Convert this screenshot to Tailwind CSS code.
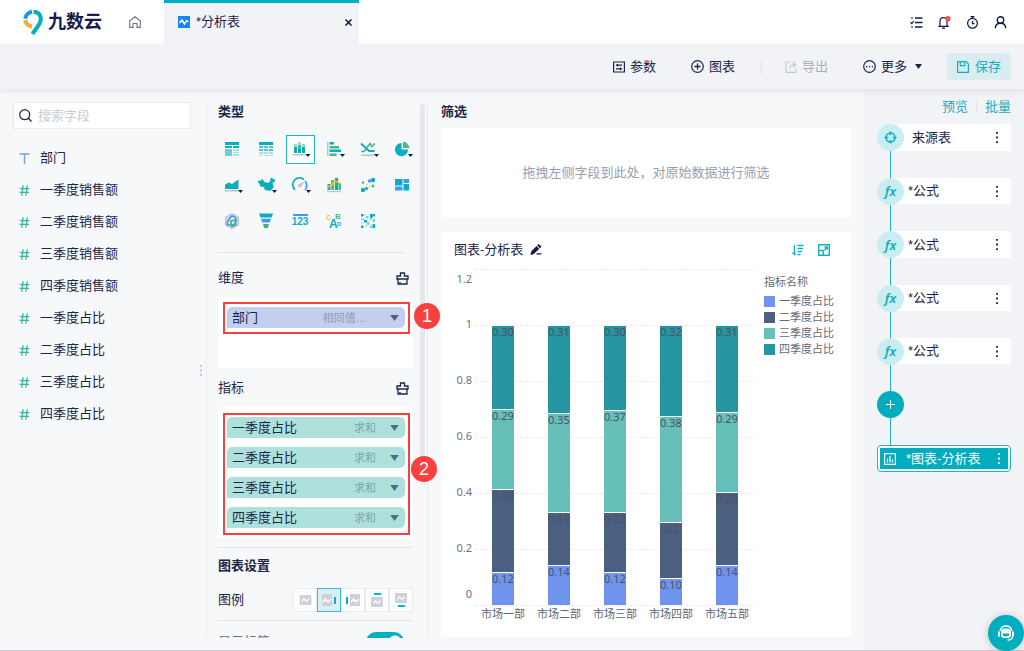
<!DOCTYPE html>
<html lang="zh-CN">
<head>
<meta charset="utf-8">
<title>分析表</title>
<script src="https://cdn.jsdelivr.net/npm/@tailwindcss/browser@4"></script>
</head>
<body class="h-screen overflow-hidden bg-[#f7f8fa] font-['Liberation_Sans','Noto_Sans_CJK_SC',sans-serif] text-[13px] leading-5 text-[#1c2549]">
<svg class="hidden" aria-hidden="true">
  <symbol id="brush" viewBox="0 0 13 13"><path d="M1 4h3.500V1h4v3H12v3H1zM2 7v5h9V7M4 12v-2" fill="none" stroke="currentColor" stroke-width="1.300"/></symbol>
  <symbol id="caret" viewBox="0 0 10 7"><path d="M0 0h10L5 7z" fill="currentColor"/></symbol>
  <symbol id="hash" viewBox="0 0 12 12"><path d="M4.500 .500 3 11.500M9 .500 7.500 11.500M1 4h10.500M.500 8H11" fill="none" stroke="#3db5a6" stroke-width="1.500"/></symbol>
  <symbol id="dots" viewBox="0 0 4 14"><path d="M1 1h2v2H1zM1 6h2v2H1zM1 11h2v2H1z" fill="currentColor"/></symbol>
  <symbol id="thumb" viewBox="0 0 13 11"><path d="M0 0h13v11H0z" fill="#d0d0da"/><path d="m2.500 7 2.500-3 2.500 3 3-3" fill="none" stroke="#fff" stroke-width="1.400"/></symbol>
</svg>
<div class="flex h-full flex-col border-b border-[#cdced2]">

  <header class="flex h-11 shrink-0 items-center bg-white">
    <a href="#" class="flex h-full w-[106px] items-center gap-1 pl-[23px]" aria-label="九数云">
      <svg class="h-[26px] w-[21px] shrink-0" viewBox="0 0 21 26"><path d="M2.200 9.800a8 8 0 0 1 6.800-7" fill="none" stroke="#0f9be5" stroke-width="4"/><path d="M2.200 11.200a8 8 0 0 0 6.800 6.300" fill="none" stroke="#f9a83c" stroke-width="4"/><path d="M10.500 2.700c5 0 7.800 4 7.200 8.300-.600 5-5 8.500-8.200 14" fill="none" stroke="#00afbf" stroke-width="4"/></svg>
      <span class="shrink-0 text-[18px] font-bold leading-6 text-[#171c4e]">九数云</span>
    </a>
    <a href="#" class="ml-[23px] text-[#6d7488]" aria-label="首页"><svg class="h-3 w-3" viewBox="0 0 12 12"><path d="M.700 11.400V4.800L6 .700l5.300 4.100v6.600H8V7.500H4v3.900z" fill="none" stroke="currentColor" stroke-width="1.100"/></svg></a>
    <div class="ml-[23px] flex h-full w-[195px] items-center border-t-[3px] border-[#00b0bf] bg-[#f1f3f7] pb-[3px] pl-[14px] pr-[7px]">
      <svg class="h-3 w-3" viewBox="0 0 12 12"><path d="M0 0h12v12H0z" fill="#1684fb"/><path d="m1.500 7 2.500-3 2.500 4 2-3.500 2 1.500" fill="none" stroke="#fff" stroke-width="1.500"/></svg>
      <span class="ml-1.5 flex-1">*分析表</span>
      <button class="text-[#0f1740]" aria-label="关闭"><svg class="h-[7px] w-[7px]" viewBox="0 0 7 7"><path d="m.500.500 6 6m0-6-6 6" stroke="currentColor" stroke-width="1.500"/></svg></button>
    </div>
    <nav class="ml-auto flex items-center gap-[15px] pr-[17px]">
      <button aria-label="任务"><svg class="h-[13px] w-[13px]" viewBox="0 0 13 13"><path d="M5 2h7.500M5 6.500h7.500M5 11h7.500" stroke="#131b45" stroke-width="1.600"/><path d="M1 2h2M.500 6.200l1.300 1.300 2-2.500M1 11h2" fill="none" stroke="#131b45" stroke-width="1.200"/></svg></button>
      <button aria-label="通知"><svg class="h-[13px] w-[13px]" viewBox="0 0 13 13"><path d="M2 10V5.500C2 3.200 3.500 1.600 5.500 1.600S9 3.200 9 5.500V10M.300 10.300h10.500M4 12.200h3" fill="none" stroke="#131b45" stroke-width="1.200"/><circle cx="10" cy="2.800" r="2.700" fill="#f0525a"/></svg></button>
      <button aria-label="历史"><svg class="h-[13px] w-[13px]" viewBox="0 0 13 13"><circle cx="6.500" cy="7.300" r="4.900" fill="none" stroke="#131b45" stroke-width="1.300"/><path d="M4.500.700h4M6.500.700v2M6.500 4.700v3h2" fill="none" stroke="#131b45" stroke-width="1.300"/></svg></button>
      <button aria-label="用户"><svg class="h-[13px] w-[13px]" viewBox="0 0 13 13"><circle cx="6.500" cy="4" r="3.200" fill="none" stroke="#131b45" stroke-width="1.400"/><path d="M1.300 12.200c0-3 2-5 5.200-5s5.200 2 5.200 5" fill="none" stroke="#131b45" stroke-width="1.400"/></svg></button>
    </nav>
  </header>

  <div class="relative flex h-[45px] shrink-0 items-center justify-end bg-[#f1f3f7] pr-[13px] shadow-[0_2px_6px_rgba(20,30,60,0.09)]">
    <button class="flex items-center gap-[5px]"><svg class="h-3 w-3" viewBox="0 0 12 12"><path d="M.600 1h10.800v10H.600z" fill="none" stroke="#1c2549" stroke-width="1.200"/><path d="M3 4.200h6M3 7.800h6M4.500 3v2.400M7.500 6.600V9" stroke="#1c2549" stroke-width="1.200"/></svg>参数</button>
    <button class="ml-[35px] flex items-center gap-[5px]"><svg class="h-[13px] w-[13px]" viewBox="0 0 13 13"><circle cx="6.500" cy="6.500" r="5.800" fill="none" stroke="#1c2549" stroke-width="1.200"/><path d="M3.500 6.500h6M6.500 3.500v6" stroke="#1c2549" stroke-width="1.300"/></svg>图表</button>
    <span class="ml-[26px] h-4 w-px bg-[#e1e3e9]"></span>
    <button class="ml-[23px] flex items-center gap-[5px] text-[#a9afbd]" disabled><svg class="h-3 w-3" viewBox="0 0 12 12"><path d="M5 1H1v10.300h10V7.500M4.800 8c0-3 1.500-4.500 5.500-4.500M8 .800l2.800 2.700L8 6.200" fill="none" stroke="#c5c9d3" stroke-width="1.200"/></svg>导出</button>
    <button class="ml-[35px] flex items-center gap-[5px]"><svg class="h-[13px] w-[13px]" viewBox="0 0 13 13"><circle cx="6.500" cy="6.500" r="5.800" fill="none" stroke="#1c2549" stroke-width="1.200"/><path d="M3 6h1.300v1.200H3zM5.900 6h1.300v1.200H5.900zM8.800 6h1.300v1.200H8.800z" fill="#1c2549"/></svg>更多<svg class="ml-[3px] h-[5px] w-[7px]"><use href="#caret"/></svg></button>
    <button class="ml-[25px] flex h-[27px] w-16 items-center justify-center gap-[6px] rounded-sm bg-[#d9ecf0] text-[#1badbc]"><svg class="h-3 w-3" viewBox="0 0 12 12"><path d="M.600.600h8.400l2.400 2.400v8.400H.600zM3.300.600v4h4.500v-4" fill="none" stroke="currentColor" stroke-width="1.200"/></svg>保存</button>
  </div>

  <div class="flex min-h-0 flex-1">
    <aside class="relative w-[206px] shrink-0 pl-[13px] pr-[15px] pt-[13px]">
      <label class="flex h-[27px] items-center border border-[#e8eaee] bg-white pl-[5px]">
        <svg class="h-[13px] w-[13px] shrink-0" viewBox="0 0 13 13"><circle cx="5.700" cy="5.700" r="5" fill="none" stroke="#1c2549" stroke-width="1.200"/><path d="m9.300 9.300 3.200 3.200" stroke="#1c2549" stroke-width="1.300"/></svg>
        <input type="text" placeholder="搜索字段" aria-label="搜索字段" class="ml-1.5 w-full min-w-0 bg-transparent outline-none placeholder:text-[#c9ccd5]">
      </label>
      <ul class="mt-[13px] pl-[6px]">
        <li class="flex h-8 items-center gap-[10px]"><svg class="h-[11px] w-[11px]" viewBox="0 0 11 11"><path d="M.500 1h10M5.500 1v10" stroke="#7b9fe0" stroke-width="1.400"/></svg>部门</li>
        <li class="flex h-8 items-center gap-[10px]"><svg class="h-[11px] w-[11px]"><use href="#hash"/></svg>一季度销售额</li>
        <li class="flex h-8 items-center gap-[10px]"><svg class="h-[11px] w-[11px]"><use href="#hash"/></svg>二季度销售额</li>
        <li class="flex h-8 items-center gap-[10px]"><svg class="h-[11px] w-[11px]"><use href="#hash"/></svg>三季度销售额</li>
        <li class="flex h-8 items-center gap-[10px]"><svg class="h-[11px] w-[11px]"><use href="#hash"/></svg>四季度销售额</li>
        <li class="flex h-8 items-center gap-[10px]"><svg class="h-[11px] w-[11px]"><use href="#hash"/></svg>一季度占比</li>
        <li class="flex h-8 items-center gap-[10px]"><svg class="h-[11px] w-[11px]"><use href="#hash"/></svg>二季度占比</li>
        <li class="flex h-8 items-center gap-[10px]"><svg class="h-[11px] w-[11px]"><use href="#hash"/></svg>三季度占比</li>
        <li class="flex h-8 items-center gap-[10px]"><svg class="h-[11px] w-[11px]"><use href="#hash"/></svg>四季度占比</li>
      </ul>
      <svg class="absolute right-1 top-[276px] h-[11px] w-[2px]" viewBox="0 0 2 11"><path d="M0 0h2v2H0zM0 4.500h2v2H0zM0 9h2v2H0z" fill="#c4c8d1"/></svg>
    </aside>

    <section class="relative mb-3 mt-[13px] w-[222px] shrink-0 border-x border-[#e9ebef]">
      <div class="h-full overflow-hidden pl-[11px] pr-[14px]">
        <h2 class="font-bold">类型</h2>
        <div class="-ml-[3px] mt-[9px] grid w-[204px] grid-cols-6 [&>button]:flex [&>button]:h-9 [&>button]:items-center [&>button]:justify-center">
          <button aria-label="分组表"><svg class="h-5 w-5" viewBox="0 0 20 20"><path d="M3 3h14v3H3zM3 7h7v2H3zM11 7h6v2h-6z" fill="#0aaebd"/><path d="M3 10h7v7H3z" fill="#6ccdd6"/><path d="M11 10h6v2h-6zM11 13h6v1h-6zM11 15h6v2h-6z" fill="#a9e0e6"/></svg></button>
          <button aria-label="明细表"><svg class="h-5 w-5" viewBox="0 0 20 20"><path d="M3 3h14v3H3z" fill="#0aaebd"/><path d="M3 7h4v2H3zM8 7h4v2H8zM13 7h4v2h-4zM3 10h4v2H3zM8 10h4v2H8zM13 10h4v2h-4z" fill="#55c5cf"/><path d="M3 13h4v2H3zM8 13h4v2H8zM13 13h4v2h-4zM3 16h4v1H3zM8 16h4v1H8zM13 16h4v1h-4z" fill="#a9dfe5"/></svg></button>
          <button aria-label="柱状图"><span class="flex h-[29px] w-[29px] items-center justify-center border border-[#24b6c3] bg-white"><svg class="h-5 w-5" viewBox="0 0 20 20"><path d="M4 5h3v3H4zM12 5h3v3h-3z" fill="#8edce1"/><path d="M4 8h3v6H4zM8 10h3v4H8zM12 8h3v6h-3z" fill="#0aaebd"/><path d="M8 3h3v3H8z" fill="#a8dfb8"/><path d="M8 6h3v4H8z" fill="#43be82"/><path d="M3 15h13v1.500H3z" fill="#bfc0d0"/><path d="M15.500 15H20.500l-2.500 3z" fill="#131a42"/></svg></span></button>
          <button aria-label="条形图"><svg class="h-5 w-5 overflow-visible" viewBox="0 0 20 20"><path d="M3 3h1.500v14H3z" fill="#bfc0d0"/><path d="M5.500 3H10v2.500H5.500zM5.500 10.500H17V13H5.500z" fill="#0aaebd"/><path d="M5.500 7H15v2.500H5.500zM5.500 14.500h7V17h-7z" fill="#43be82"/><path d="M16 15h5l-2.500 3z" fill="#131a42"/></svg></button>
          <button aria-label="折线图"><svg class="h-5 w-5 overflow-visible" viewBox="0 0 20 20"><path d="M3 12.500h3l6-8 2 3 3-3" fill="none" stroke="#43be82" stroke-width="1.700"/><path d="m3 4.500 8 7.500h5.500" fill="none" stroke="#0aaebd" stroke-width="1.800"/><path d="M3 15.500h13V17H3z" fill="#bfc0d0"/><path d="M16 15h5l-2.500 3z" fill="#131a42"/></svg></button>
          <button aria-label="饼图"><svg class="h-5 w-5 overflow-visible" viewBox="0 0 20 20"><path d="M9.500 4a6.600 6.600 0 1 0 6.600 6.600H9.500z" fill="#0aaebd"/><path d="M11 2.800a6.300 6.300 0 0 1 6.200 6.300H11z" fill="#43be82"/><path d="M16 15h5l-2.500 3z" fill="#131a42"/></svg></button>
          <button aria-label="面积图"><svg class="h-5 w-5 overflow-visible" viewBox="0 0 20 20"><path d="M3 14V9.500L7 7.500l3 1.500 6.500-4.500V14z" fill="#0aaebd"/><path d="M3 15h13v1.500H3z" fill="#bfc0d0"/><path d="M16 15h5l-2.500 3z" fill="#131a42"/></svg></button>
          <button aria-label="地图"><svg class="h-5 w-5 overflow-visible" viewBox="0 0 20 20"><path d="m1.500 6 3-.500L6.500 4l2 3 3.500 1 2.500-2-.500-2 2-1.500 1.500 2 2-.500-1 3-2 .800.500 2 .800 2.200-2.300 3-2.500 1-2-1-2 .500L8 12l-3.500-.500-1-2.500z" fill="#0aaebd"/><path d="M16 15h5l-2.500 3z" fill="#131a42"/></svg></button>
          <button aria-label="仪表盘"><svg class="h-5 w-5 overflow-visible" viewBox="0 0 20 20"><path d="M5 14.800a6.500 6.500 0 1 1 9-10.200" fill="none" stroke="#0aaebd" stroke-width="1.700"/><path d="M15 6a6.500 6.500 0 0 1 0 8.800" fill="none" stroke="#3a9cff" stroke-width="1.700"/><path d="m14 6.500-2.500 5-2 1-1.500-1 .500-2z" fill="#bfc0d0"/><path d="M16 15h5l-2.500 3z" fill="#131a42"/></svg></button>
          <button aria-label="组合图"><svg class="h-5 w-5" viewBox="0 0 20 20"><path d="M3.500 9h3v6h-3zM11 3h3v12h-3z" fill="#0aaebd"/><path d="M7.200 5h3v10h-3zM14.500 8H17v7h-2.500z" fill="#43be82"/><path d="m3 12 3-1 2-1 3-4 3 1.500 3 1" fill="none" stroke="#fbbf1f" stroke-width="1.700"/><path d="M3 16h14v1.200H3z" fill="#bfc0d0"/></svg></button>
          <button aria-label="散点图"><svg class="h-5 w-5" viewBox="0 0 20 20"><circle cx="15" cy="5" r="2.200" fill="#0aaebd"/><circle cx="5" cy="15" r="2.200" fill="#0aaebd"/><circle cx="11.500" cy="6" r="1.800" fill="#3a9cff"/><circle cx="8.500" cy="13.500" r="1.700" fill="#3a9cff"/><circle cx="5" cy="7.500" r="1.300" fill="#43be82"/><circle cx="15" cy="11" r="1.400" fill="#43be82"/><path d="M8 8.500h1.500V10H8zM11 11h1.500v1.500H11z" fill="#fbbf1f"/></svg></button>
          <button aria-label="矩形树图"><svg class="h-5 w-5" viewBox="0 0 20 20"><path d="M3 4h7.500v6.500H3zM11.500 9H17v6.500h-5.500z" fill="#0aaebd"/><path d="M11.500 4H17v4h-5.500zM3 11.500h7.500v4H3z" fill="#3a9cff"/></svg></button>
          <button aria-label="雷达图"><svg class="h-5 w-5" viewBox="0 0 20 20"><path d="m10 2.800 6.300 3.600v7.300L10 17.300l-6.300-3.600V6.400z" fill="#e6e7ef" stroke="#bfc0d0" stroke-width="1.500"/><path d="M10 5c3 0 4.500 3 4 5l-2 4H5.500C4.500 11 7 7 10 5z" fill="none" stroke="#3a9cff" stroke-width="1.700"/><path d="m8.500 10 5.500-1-.500 5-3.500 1.500z" fill="none" stroke="#36b86f" stroke-width="1.600"/></svg></button>
          <button aria-label="漏斗图"><svg class="h-5 w-5" viewBox="0 0 20 20"><path d="M3 2.500h14l-1.500 4h-11z" fill="#0aaebd"/><path d="M5 7.800h10l-1.300 3.700H6.300z" fill="#3a9cff"/><path d="M7 13h6l-1.200 4H8.200z" fill="#2fb96b"/></svg></button>
          <button aria-label="指标卡" class="flex-col text-[#0aaebd]"><span class="h-[2px] w-[15px] bg-[#3a9cff]"></span><span class="font-['Liberation_Sans',sans-serif] text-[10px] font-bold leading-3">123</span></button>
          <button aria-label="词云"><svg class="h-5 w-5" viewBox="0 0 20 20" font-family="Liberation Sans, sans-serif" font-weight="700"><text x="5" y="17" font-size="12" fill="#0aaebd">A</text><text x="2" y="9" font-size="7" fill="#fbbf1f">C</text><text x="11" y="8" font-size="8" fill="#43be82">B</text><text x="13" y="15" font-size="6" fill="#3a9cff">D</text></svg></button>
          <button aria-label="热力图"><svg class="h-5 w-5" viewBox="0 0 20 20"><path d="M3 3h2.500v2.500H3zM12 3h5v2.500h-2.500v2H12zM6 9h3v2.500H6zM3 14.500h2.500V17H3zM14.500 13H17v4h-2.500z" fill="#0aaebd"/><path d="M8 5h2.500v2.500H8zM3 7.500h3V9H3zM9 11h2.500v3H9zM14.500 8H17v3h-2.500zM12 14.500h2V17h-2z" fill="#79d2d8"/><path d="M6 3h2v2H6zM3 11h2v2H3zM11 8h2v2h-2zM7 14h2v2H7z" fill="#b9e6ea"/></svg></button>
        </div>
        <hr class="mr-2 mt-[13px] border-[#e3e5eb]">
        <div class="mt-[15px] flex items-center justify-between pr-[4px]"><h3>维度</h3><button aria-label="清空维度"><svg class="h-[13px] w-[13px]"><use href="#brush"/></svg></button></div>
        <div class="relative mt-[9px] h-[71px] bg-white pl-[9px] pr-[8px] pt-[10px]">
          <div class="flex h-[21px] items-center rounded-[5px] rounded-bl-none bg-[#c3cfee] px-[5px]"><span class="flex-1">部门</span><span class="text-[11px] text-[#8f9bb9]">相同值...</span><button class="ml-[25px] mr-[1px] text-[#4f5f84]" aria-label="展开"><svg class="h-[6px] w-[9px]"><use href="#caret"/></svg></button></div>
          <div class="pointer-events-none absolute left-[5px] right-[3px] top-[5px] h-[32px] border-2 border-[#f9403f]"></div>
        </div>
        <div class="mt-[10px] flex items-center justify-between pr-[4px]"><h3>指标</h3><button aria-label="清空指标"><svg class="h-[13px] w-[13px]"><use href="#brush"/></svg></button></div>
        <div class="relative mt-[9px] flex flex-col gap-[9px] bg-white py-[10px] pl-[9px] pr-[8px]">
          <div class="flex h-[21px] items-center rounded-[5px] rounded-bl-none bg-[#afe1dc] px-[5px]"><span class="flex-1">一季度占比</span><span class="text-[11px] text-[#7fa3ad]">求和</span><button class="ml-[14px] mr-[1px] text-[#47708a]" aria-label="展开"><svg class="h-[6px] w-[9px]"><use href="#caret"/></svg></button></div>
          <div class="flex h-[21px] items-center rounded-[5px] rounded-bl-none bg-[#afe1dc] px-[5px]"><span class="flex-1">二季度占比</span><span class="text-[11px] text-[#7fa3ad]">求和</span><button class="ml-[14px] mr-[1px] text-[#47708a]" aria-label="展开"><svg class="h-[6px] w-[9px]"><use href="#caret"/></svg></button></div>
          <div class="flex h-[21px] items-center rounded-[5px] rounded-bl-none bg-[#afe1dc] px-[5px]"><span class="flex-1">三季度占比</span><span class="text-[11px] text-[#7fa3ad]">求和</span><button class="ml-[14px] mr-[1px] text-[#47708a]" aria-label="展开"><svg class="h-[6px] w-[9px]"><use href="#caret"/></svg></button></div>
          <div class="flex h-[21px] items-center rounded-[5px] rounded-bl-none bg-[#afe1dc] px-[5px]"><span class="flex-1">四季度占比</span><span class="text-[11px] text-[#7fa3ad]">求和</span><button class="ml-[14px] mr-[1px] text-[#47708a]" aria-label="展开"><svg class="h-[6px] w-[9px]"><use href="#caret"/></svg></button></div>
          <div class="pointer-events-none absolute bottom-[3px] left-[5px] right-[3px] top-[6px] border-2 border-[#f9403f]"></div>
        </div>
        <hr class="mt-[9px] border-[#e3e5eb]">
        <h2 class="mt-2 font-bold">图表设置</h2>
        <div class="mt-3 flex items-center justify-between">
          <h3>图例</h3>
          <div class="flex [&>button]:flex [&>button]:h-6 [&>button]:w-6 [&>button]:items-center [&>button]:justify-center [&>button]:gap-[2px] [&>button]:border">
            <button aria-label="无" class="border-[#eaebf0] bg-white"><svg class="h-[10px] w-[13px]"><use href="#thumb"/></svg></button>
            <button aria-label="右" class="border-[#3abcc8] bg-[#d9eff2]"><svg class="h-3 w-[10px]" viewBox="0 0 10 12"><path d="M0 0h10v12H0z" fill="#d0d0da"/><path d="m1 8 2.500-3 2.500 3 3-3" fill="none" stroke="#fff" stroke-width="1.300"/></svg><span class="h-[7px] w-[2px] bg-[#0cb0bf]"></span></button>
            <button aria-label="左" class="border-[#eaebf0] bg-white"><span class="h-[7px] w-[2px] bg-[#0cb0bf]"></span><svg class="h-3 w-[10px]" viewBox="0 0 10 12"><path d="M0 0h10v12H0z" fill="#d0d0da"/><path d="m1 8 2.500-3 2.500 3 3-3" fill="none" stroke="#fff" stroke-width="1.300"/></svg></button>
            <button aria-label="上" class="flex-col border-[#eaebf0] bg-white"><span class="h-[2px] w-[7px] bg-[#0cb0bf]"></span><svg class="h-[10px] w-3"><use href="#thumb"/></svg></button>
            <button aria-label="下" class="flex-col border-[#eaebf0] bg-white"><svg class="h-[10px] w-3"><use href="#thumb"/></svg><span class="h-[2px] w-[7px] bg-[#0cb0bf]"></span></button>
          </div>
        </div>
        <hr class="mt-2 border-[#e3e5eb]">
        <label class="mt-[11px] flex items-center justify-between pr-[9px] text-[#6a718a]">显示标签
          <input type="checkbox" checked class="h-5 w-[38px] appearance-none rounded-full bg-[#00b0bf] bg-[radial-gradient(circle_at_29px_10px,#fff_6px,transparent_7px)]">
        </label>
      </div>
      <div class="absolute right-[2px] top-[2px] h-[358px] w-[5px] rounded-full bg-[#e5e7eb]"></div>
      <div class="absolute -right-[13px] top-[201px] flex h-[26px] w-[26px] items-center justify-center rounded-full bg-[#f9403f] font-['Liberation_Sans',sans-serif] text-[18px] text-white">1</div>
      <div class="absolute -right-[10px] top-[354px] flex h-[26px] w-[26px] items-center justify-center rounded-full bg-[#f9403f] font-['Liberation_Sans',sans-serif] text-[18px] text-white">2</div>
    </section>

    <main class="flex min-w-0 flex-1 flex-col px-[13px] pb-[13px] pt-[13px]">
      <h2 class="font-bold">筛选</h2>
      <div class="mt-1.5 flex h-[89px] shrink-0 items-center justify-center bg-white text-[#999eb0]">拖拽左侧字段到此处，对原始数据进行筛选</div>
      <div class="mt-[15px] flex min-h-0 flex-1 flex-col bg-white">
        <div class="flex h-9 shrink-0 items-center pl-[13px] pr-[21px]">
          <h3>图表-分析表</h3>
          <button class="ml-[7px]" aria-label="重命名"><svg class="h-3 w-3" viewBox="0 0 12 12"><path d="M.500 11 1.200 7.500 6.500 2l2.800 2.800-5.800 5.500zM7.200 1.400 8.700 0l2.800 2.800L10 4.200zM7 9.200h4.500v1.300H6z" fill="#131a45"/></svg></button>
          <button class="ml-auto" aria-label="排序"><svg class="h-3 w-3" viewBox="0 0 12 12"><path d="M2.500 1v9M.500 8.500l2 2 1-1M5.500 1.500h6M5.500 4.500H11M5.500 7.500h4.500M5.500 10.500h3" fill="none" stroke="#14b0be" stroke-width="1.400"/></svg></button>
          <button class="ml-[14px]" aria-label="放大"><svg class="h-3 w-3" viewBox="0 0 12 12"><path d="M.700.700h10.600v10.600H.700zM6.500 3h2.800v2.800M9 3.200 6.300 6M.700 6.500h4.500v4.500" fill="none" stroke="#14b0be" stroke-width="1.400"/></svg></button>
        </div>
        <div class="flex min-h-0 flex-1">
          <svg id="chart" class="h-[369px] w-[323px] shrink-0 font-['Noto_Sans','Noto_Sans_CJK_SC',sans-serif] text-[11px]" viewBox="0 0 323 369" role="img" aria-label="各市场部门季度占比堆积柱状图"></svg>
          <div class="pt-[6px] text-[11px] leading-4 text-[#646b79]">
            <p class="mb-[3px]">指标名称</p>
            <ul>
              <li class="flex items-center gap-1"><i class="h-[11px] w-[11px] bg-[#7094ee]"></i>一季度占比</li>
              <li class="flex items-center gap-1"><i class="h-[11px] w-[11px] bg-[#4b6080]"></i>二季度占比</li>
              <li class="flex items-center gap-1"><i class="h-[11px] w-[11px] bg-[#66bfb8]"></i>三季度占比</li>
              <li class="flex items-center gap-1"><i class="h-[11px] w-[11px] bg-[#2595a1]"></i>四季度占比</li>
            </ul>
          </div>
        </div>
      </div>
    </main>

    <aside class="w-40 shrink-0 bg-[#f1f3f7] pl-[13px] pr-[13px] pt-2">
      <div class="flex items-center justify-end text-[#1badbc]"><a href="#">预览</a><span class="mx-[8px] h-3 w-px bg-[#e1e3e9]"></span><a href="#">批量</a></div>
      <div class="mt-[7px] [&_.line]:ml-[13px] [&_.line]:h-[27px] [&_.line]:w-px [&_.line]:bg-[#1fb5c3] [&_.fx]:flex [&_.fx]:h-[27px] [&_.fx]:w-[27px] [&_.fx]:items-center [&_.fx]:justify-center [&_.fx]:rounded-full [&_.fx]:bg-[#c9edf1] [&_.fx]:font-['Noto_Sans',sans-serif] [&_.fx]:font-semibold [&_.fx]:italic [&_.fx]:text-[#14adbb]">
        <div class="flex h-[27px] items-center rounded-l-full rounded-r-sm bg-white pr-3"><span class="flex h-[27px] w-[27px] items-center justify-center rounded-full bg-[#c9edf1]"><svg class="h-[13px] w-[13px]" viewBox="0 0 13 13"><circle cx="6.500" cy="6.500" r="4.500" fill="none" stroke="#14adbb" stroke-width="1.500"/><path d="M6.500.500v3.800M6.500 8.700v3.800M.500 6.500h3.800M8.700 6.500h3.800" stroke="#14adbb" stroke-width="1.500"/></svg></span><span class="ml-2 flex-1">来源表</span><button aria-label="更多操作"><svg class="h-[13px] w-[4px]"><use href="#dots"/></svg></button></div>
        <div class="line"></div>
        <div class="flex h-[26px] items-center rounded-l-full rounded-r-sm bg-white pr-3"><span class="fx">fx</span><span class="ml-1 flex-1">*公式</span><button aria-label="更多操作"><svg class="h-[13px] w-[4px]"><use href="#dots"/></svg></button></div>
        <div class="line"></div>
        <div class="flex h-[27px] items-center rounded-l-full rounded-r-sm bg-white pr-3"><span class="fx">fx</span><span class="ml-1 flex-1">*公式</span><button aria-label="更多操作"><svg class="h-[13px] w-[4px]"><use href="#dots"/></svg></button></div>
        <div class="line"></div>
        <div class="flex h-[26px] items-center rounded-l-full rounded-r-sm bg-white pr-3"><span class="fx">fx</span><span class="ml-1 flex-1">*公式</span><button aria-label="更多操作"><svg class="h-[13px] w-[4px]"><use href="#dots"/></svg></button></div>
        <div class="line"></div>
        <div class="flex h-[26px] items-center rounded-l-full rounded-r-sm bg-white pr-3"><span class="fx">fx</span><span class="ml-1 flex-1">*公式</span><button aria-label="更多操作"><svg class="h-[13px] w-[4px]"><use href="#dots"/></svg></button></div>
        <div class="line"></div>
        <button class="flex h-[27px] w-[27px] items-center justify-center rounded-full bg-[#00adbe]" aria-label="添加步骤"><svg class="h-[9px] w-[9px]" viewBox="0 0 9 9"><path d="M0 4.500h9M4.500 0v9" stroke="#fff"/></svg></button>
        <div class="line"></div>
        <div class="rounded-sm border border-[#1fb5c3] bg-white p-[2px]"><div class="flex h-[21px] items-center bg-[#00adbe] pl-[4px] pr-[7px] text-white"><svg class="h-3 w-3" viewBox="0 0 12 12"><path d="M.600.600h10.800v10.800H.600z" fill="none" stroke="#fff" stroke-width="1.200"/><path d="M3.500 9.500V5.500M6 9.500V3M8.500 9.500V6.500" stroke="#fff" stroke-width="1.200"/></svg><span class="ml-[10px] flex-1">*图表-分析表</span><button aria-label="更多操作"><svg class="h-[13px] w-[4px]"><use href="#dots"/></svg></button></div></div>
      </div>
    </aside>
  </div>
</div>
<button class="fixed bottom-0 right-0 flex h-9 w-9 items-center justify-center rounded-full bg-[#00adbe] shadow-[0_1px_8px_rgba(0,0,0,0.2)]" aria-label="在线客服"><svg class="h-[18px] w-[18px]" viewBox="0 0 18 18"><path d="M3 7c.500-3.500 3-5 6-5s5.500 1.500 6 5" fill="none" stroke="#fff" stroke-width="1.300"/><rect x="4" y="4.500" width="10" height="9.500" rx="3" fill="#fff"/><path d="M5.500 9.500h7c0 2-1 3-3.500 3s-3.500-1-3.500-3z" fill="#00adbe"/><path d="M1 7.500h2v5H1zM15 7.500h2v5h-2z" fill="#fff"/><path d="M15.500 12.500c0 2.300-1.500 3.500-5 3.500" fill="none" stroke="#fff" stroke-width="1.300"/></svg></button>
<script>
  const NS = 'http://www.w3.org/2000/svg';
  const chart = document.getElementById('chart');
  const add = (tag, attrs, text) => {
    const el = document.createElementNS(NS, tag);
    for (const k in attrs) el.setAttribute(k, attrs[k]);
    if (text) el.textContent = text;
    chart.appendChild(el);
  };
  const base = 337, unit = 280;
  [['0', 0, 330], ['0.2', 0.2, 284], ['0.4', 0.4, 228], ['0.6', 0.6, 172], ['0.8', 0.8, 116], ['1', 1, 60], ['1.2', 1.2, 15]].forEach(([t, v, y]) => {
    const gy = base - v * unit + 0.5;
    add('line', { x1: 34, x2: 312, y1: gy, y2: gy, stroke: '#ebecef', 'stroke-dasharray': '3 2' });
    add('text', { x: 31, y, 'text-anchor': 'end', fill: '#6c7280' }, t);
  });
  const colors = ['#7094ee', '#4b6080', '#66bfb8', '#2595a1'];
  const rows = [
    ['市场一部', [0.118, 0.415, 0.7, 1], ['0.12', '0.30', '0.29', '0.30']],
    ['市场二部', [0.142, 0.331, 0.684, 1], ['0.14', '0.19', '0.35', '0.31']],
    ['市场三部', [0.118, 0.331, 0.698, 1], ['0.12', '0.22', '0.37', '0.30']],
    ['市场四部', [0.095, 0.295, 0.675, 1], ['0.10', '0.2', '0.38', '0.32']],
    ['市场五部', [0.142, 0.403, 0.689, 1], ['0.14', '0.26', '0.29', '0.31']]
  ];
  rows.forEach(([name, tops, labels], i) => {
    const x = 51 + i * 56;
    let prev = 0;
    tops.forEach((t, j) => {
      const y = Math.round(base - t * unit), b = Math.round(base - prev * unit);
      add('rect', { x, y: y + 1, width: 22, height: b - y - 1, fill: colors[j] });
      prev = t;
    });
    tops.forEach((t, j) => add('text', { x: x + 11, y: Math.round(base - t * unit) + 11, 'text-anchor': 'middle', fill: '#475266' }, labels[j]));
    add('text', { x: x + 11, y: 350, 'text-anchor': 'middle', fill: '#5f6675' }, name);
  });
</script>
</body>
</html>
